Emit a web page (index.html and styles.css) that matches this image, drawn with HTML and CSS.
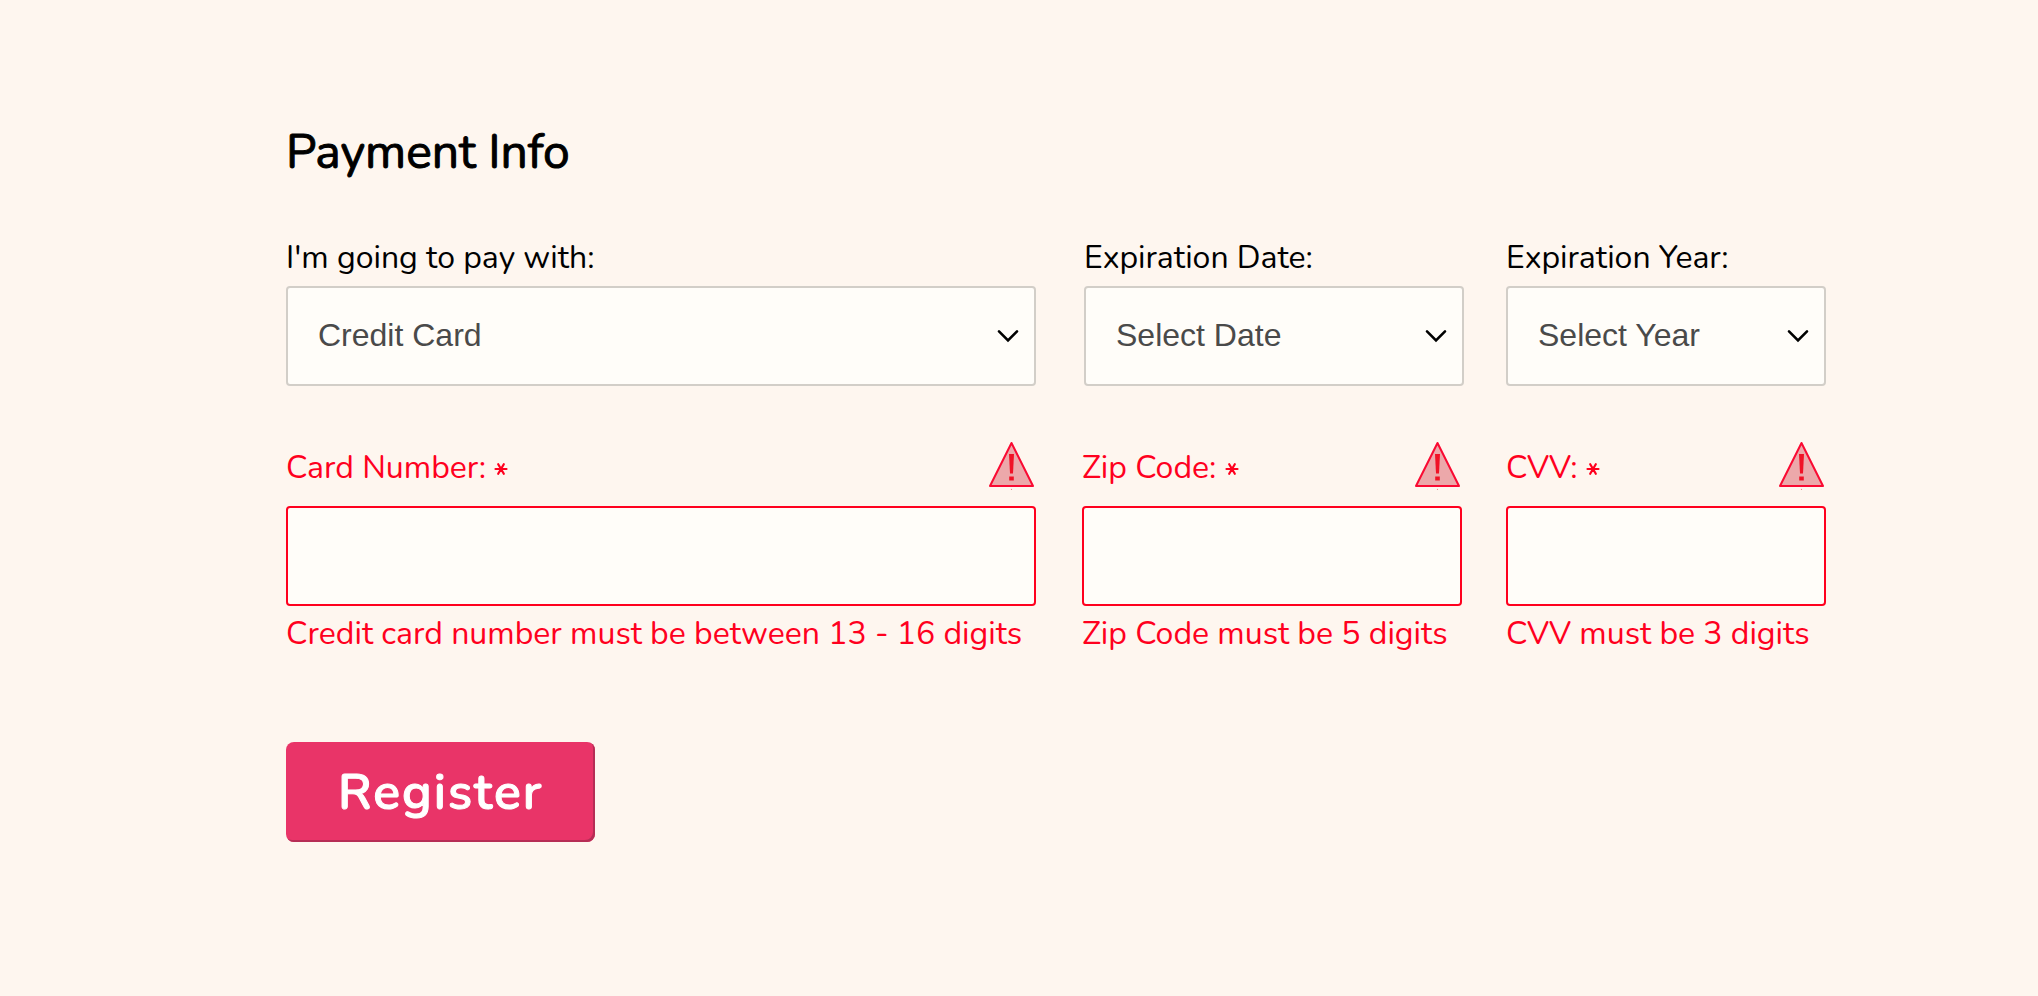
FILE: index.html
```html
<!DOCTYPE html>
<html lang="en">
<head>
<meta charset="utf-8">
<title>Payment Info</title>
<link rel="stylesheet" href="styles.css">
</head>
<body>
<svg class="sprite" aria-hidden="true">
  <symbol id="chevron" viewBox="0 0 24 16">
    <path d="M3 3.300 L12 12.300 L21 3.300" fill="none" stroke="#000" stroke-width="2.600" stroke-linecap="round"/>
  </symbol>
  <symbol id="warning" viewBox="0 0 46 50">
    <path d="M23.500 3 L45 46 H2 Z" fill="#eca8aa" stroke="#fa0a32" stroke-width="2" stroke-linejoin="round"/>
    <path d="M21 14 H26 L25 33.500 H22 Z" fill="#f01226"/>
    <path d="M21.200 36.500 H25.800 V40.500 H21.200 Z" fill="#f01226"/>
    <circle cx="23.500" cy="49.400" r="0.600" fill="#f08a90"/>
  </symbol>
  <symbol id="required" viewBox="0 0 14 14">
    <path d="M1.500 7 H12.500 M4.200 2.200 L9.800 11.800 M9.800 2.200 L4.200 11.800" fill="none" stroke="#ff001e" stroke-width="2.200" stroke-linecap="round"/>
  </symbol>
</svg>
<form class="payment" novalidate>
  <h2 class="title">Payment Info</h2>

  <div class="row row-selects">
    <div class="field">
      <label class="label" for="method">I'm going to pay with:</label>
      <div class="select-box">
        <select class="control" id="method"><option>Credit Card</option></select>
        <svg class="chevron" aria-hidden="true"><use href="#chevron"/></svg>
      </div>
    </div>
    <div class="field">
      <label class="label" for="exp-date">Expiration Date:</label>
      <div class="select-box">
        <select class="control" id="exp-date"><option>Select Date</option></select>
        <svg class="chevron" aria-hidden="true"><use href="#chevron"/></svg>
      </div>
    </div>
    <div class="field">
      <label class="label" for="exp-year">Expiration Year:</label>
      <div class="select-box">
        <select class="control" id="exp-year"><option>Select Year</option></select>
        <svg class="chevron" aria-hidden="true"><use href="#chevron"/></svg>
      </div>
    </div>
  </div>

  <div class="row row-inputs">
    <div class="field">
      <div class="label-line">
        <label class="label" for="card">Card Number: <svg class="star" role="img" aria-label="required"><use href="#required"/></svg></label>
        <svg class="warning" aria-hidden="true"><use href="#warning"/></svg>
      </div>
      <input class="control" id="card" type="text" aria-describedby="card-error">
      <p class="error" id="card-error">Credit card number must be between 13 - 16 digits</p>
    </div>
    <div class="field">
      <div class="label-line">
        <label class="label" for="zip">Zip Code: <svg class="star" role="img" aria-label="required"><use href="#required"/></svg></label>
        <svg class="warning" aria-hidden="true"><use href="#warning"/></svg>
      </div>
      <input class="control" id="zip" type="text" aria-describedby="zip-error">
      <p class="error" id="zip-error">Zip Code must be 5 digits</p>
    </div>
    <div class="field">
      <div class="label-line">
        <label class="label" for="cvv">CVV: <svg class="star" role="img" aria-label="required"><use href="#required"/></svg></label>
        <svg class="warning" aria-hidden="true"><use href="#warning"/></svg>
      </div>
      <input class="control" id="cvv" type="text" aria-describedby="cvv-error">
      <p class="error" id="cvv-error">CVV must be 3 digits</p>
    </div>
  </div>

  <button class="register" type="submit">Register</button>
</form>
</body>
</html>
```
FILE: styles.css
```css
* {
  box-sizing: border-box;
}

body {
  margin: 0;
  background: #fef6ef;
  color: #000;
  font-family: Nunito, Lato, sans-serif;
  font-size: 32px;
  line-height: 40px;
}

.sprite {
  display: none;
}

.payment {
  padding: 120px 212px 120px 286px;
}

.title {
  margin: 0 0 54px;
  font-size: 48px;
  font-weight: 400;
  line-height: 64px;
  -webkit-text-stroke: 1px #000;
}

.row {
  display: grid;
}

.row-selects {
  --gap-a: 48px;
  --gap-b: 42px;
  grid-template-columns: 798fr 422fr 320fr;
}

.row-inputs {
  --gap-a: 46px;
  --gap-b: 44px;
  grid-template-columns: 796fr 424fr 320fr;
  margin-top: 54px;
  color: #ff001e;
}

.field {
  min-width: 0;
}

.field:nth-child(1) {
  padding-right: var(--gap-a);
}

.field:nth-child(2) {
  padding-right: var(--gap-b);
}

.label {
  display: block;
}

.row-selects .label {
  padding-bottom: 8px;
}

.label-line {
  display: flex;
  justify-content: space-between;
  align-items: flex-end;
  height: 50px;
  margin-bottom: 16px;
  padding-right: 2px;
}

.row-inputs .label {
  padding-bottom: 2px;
}

.star {
  width: 14px;
  height: 14px;
  vertical-align: 2px;
}

.warning {
  width: 46px;
  height: 50px;
}

.select-box {
  display: grid;
  align-items: center;
}

.select-box > * {
  grid-area: 1 / 1;
}

.control {
  display: block;
  width: 100%;
  height: 100px;
  margin: 0;
  padding: 0 30px 2px;
  border: 2px solid #d2cec8;
  border-radius: 4px;
  background: #fffdf9;
  color: #4a4a4a;
  font-family: "Liberation Sans", Arial, sans-serif;
  font-size: 32px;
  appearance: none;
}

.row-inputs .control {
  border-color: #ff001e;
}

.chevron {
  justify-self: end;
  width: 24px;
  height: 16px;
  margin-right: 16px;
  pointer-events: none;
}

.error {
  margin: 8px 0 0;
  white-space: nowrap;
}

.register {
  display: block;
  height: 100px;
  margin-top: 88px;
  padding: 0 52px;
  border: 0;
  border-radius: 8px;
  background: #e93468;
  box-shadow: inset -2px -2px 0 #b62d55;
  color: #fff;
  font-family: inherit;
  font-size: 50px;
  font-weight: 600;
  letter-spacing: 2px;
  -webkit-text-stroke: 1px #fff;
}
```
